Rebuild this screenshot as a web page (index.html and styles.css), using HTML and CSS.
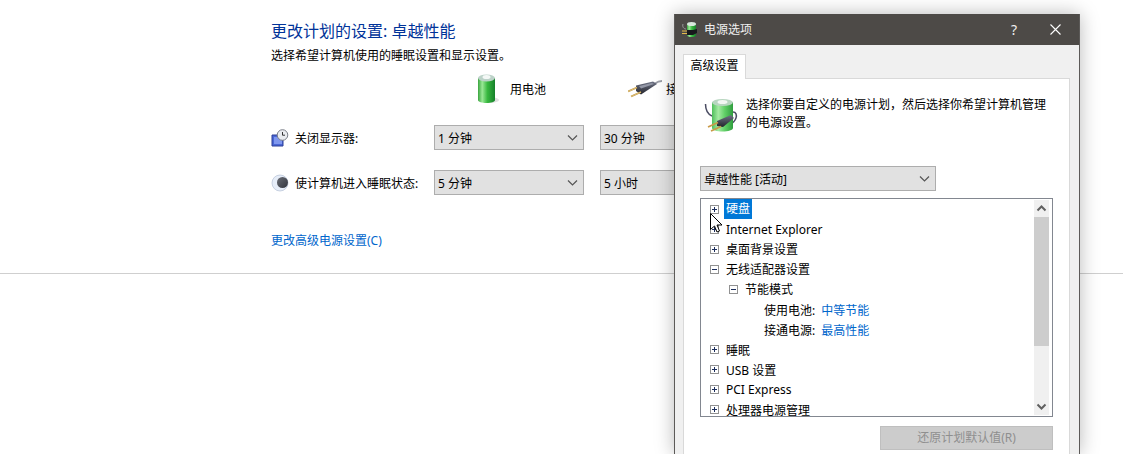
FILE: index.html
```html
<!DOCTYPE html>
<html lang="zh-CN">
  <head>
    <meta charset="UTF-8" />
    <title>电源选项</title>
    <link rel="stylesheet" href="styles.css">
  </head>
  <body>
    <svg class="defs" width="0" height="0">
      <defs>
        <linearGradient id="green" x1="0" x2="1" y1="0" y2="0">
          <stop offset="0" stop-color="#3aa53f" />
          <stop offset="0.25" stop-color="#9ae896" />
          <stop offset="0.55" stop-color="#38b83f" />
          <stop offset="1" stop-color="#15802a" />
        </linearGradient>
        <linearGradient id="green-soft" x1="0" x2="1" y1="0" y2="0">
          <stop offset="0" stop-color="#4fbf5c" />
          <stop offset="0.3" stop-color="#a4eaa2" />
          <stop offset="0.6" stop-color="#62d068" />
          <stop offset="1" stop-color="#2f9e3e" />
        </linearGradient>
        <linearGradient id="plug" x1="0" x2="0" y1="0" y2="1">
          <stop offset="0" stop-color="#6f7486" />
          <stop offset="1" stop-color="#22242c" />
        </linearGradient>
        <linearGradient id="moon" x1="0" x2="1" y1="0" y2="1">
          <stop offset="0" stop-color="#6a6d76" />
          <stop offset="1" stop-color="#33353d" />
        </linearGradient>
      </defs>
    </svg>

    <main class="plan">
      <h1 class="plan-title">更改计划的设置: 卓越性能</h1>
      <p class="plan-sub">选择希望计算机使用的睡眠设置和显示设置。</p>

      <div class="power-heads">
        <div class="power-head head-battery">
          <svg width="22" height="30" viewBox="0 0 22 30">
            <ellipse cx="13" cy="26" rx="9" ry="3" fill="#000" opacity="0.12" />
            <path d="M1 4v22c0 2 4 3 8.500 3s8.500-1 8.500-3V4z" fill="url(#green)" />
            <ellipse cx="9.500" cy="4" rx="8.500" ry="3.500" fill="#bcd2c8" />
            <ellipse cx="9.500" cy="3" rx="4" ry="2" fill="#f4f8f6" />
          </svg>
          <span>用电池</span>
        </div>
        <div class="power-head head-plug">
          <svg width="34" height="20" viewBox="0 0 34 20">
            <path d="M27 4.500c2-1.500 4-2.500 7-2.500" fill="none" stroke="#9a9da6" stroke-width="1.800" />
            <path d="M8 6.500L25 2.500l4 2.500L13 15.500 8 12z" fill="url(#plug)" />
            <path d="M11 7l13-3 2 1-13 4.500z" fill="#9397a6" />
            <path d="M0 12.500L9 8.500M3 17.500L13 13" stroke="#bf9440" stroke-width="1.800" />
            <path d="M0 12.500L9 8.500M3 17.500L13 13" stroke="#f2dc9c" stroke-width="0.600" />
          </svg>
          <span>接通电源</span>
        </div>
      </div>

      <div class="setting">
        <svg class="setting-icon" width="18" height="18" viewBox="0 0 18 18">
          <path d="M1 6h11v11H1z" fill="#4a67d6" stroke="#2c3f96" />
          <path d="M3 8h8v7H3z" fill="#7f97ee" />
          <circle cx="11.500" cy="6" r="5.300" fill="#e9ebef" stroke="#7b7f88" />
          <path d="M11.500 3v3.200h2.500" fill="none" stroke="#333" />
        </svg>
        <span class="setting-label">关闭显示器:</span>
        <div class="select"><span>1 分钟</span><svg class="chev" width="11" height="6" viewBox="0 0 11 6"><path d="M1 .5l4.500 4.500L10 .5" fill="none" stroke="#555" stroke-width="1.200" /></svg></div>
        <div class="select"><span>30 分钟</span></div>
      </div>
      <div class="setting">
        <svg class="setting-icon" width="18" height="18" viewBox="0 0 18 18">
          <circle cx="9" cy="9" r="8" fill="#e6edf8" stroke="#b4c0d4" stroke-width="0.700" />
          <circle cx="11.500" cy="8.500" r="5.500" fill="url(#moon)" />
        </svg>
        <span class="setting-label">使计算机进入睡眠状态:</span>
        <div class="select"><span>5 分钟</span><svg class="chev" width="11" height="6" viewBox="0 0 11 6"><path d="M1 .5l4.500 4.500L10 .5" fill="none" stroke="#555" stroke-width="1.200" /></svg></div>
        <div class="select"><span>5 小时</span></div>
      </div>

      <a class="plan-link" href="#">更改高级电源设置(C)</a>
    </main>
    <hr class="rule" />

    <section class="dialog">
      <header class="dialog-bar">
        <svg width="17" height="17" viewBox="0 0 17 17">
          <path d="M1 3c-1 3 1 5 3 5" fill="none" stroke="#9a9a9a" />
          <path d="M5 3v11c0 1.500 2 2 4.500 2s4.500-.5 4.500-2V3z" fill="url(#green)" />
          <ellipse cx="9.500" cy="3" rx="4.500" ry="2" fill="#d8e8dc" />
          <path d="M5 9h6l4-1v4l-4 2H5z" fill="#17181c" />
          <path d="M0 10h5M0 12.500h5" stroke="#e6bb4a" />
        </svg>
        <span class="dialog-title">电源选项</span>
        <span class="dialog-help">?</span>
        <svg class="dialog-close" width="11" height="11" viewBox="0 0 11 11"><path d="M.5.5l10 10M10.500.5l-10 10" stroke="#fff" stroke-width="1.100" /></svg>
      </header>
      <div class="dialog-body">
        <div class="tab">高级设置</div>
        <div class="panel">
          <div class="intro">
            <svg class="intro-icon" width="34" height="36" viewBox="0 0 34 36">
              <path d="M1.500 5c0 6 2 10 6.500 12M29 13c3 0 4 3 3 6s-3 5-6 6" fill="none" stroke="#4a4c62" stroke-width="1.500" />
              <path d="M8 3v26c0 2 5 3.500 10.500 3.500S29 31 29 29V3z" fill="url(#green-soft)" />
              <ellipse cx="18.500" cy="3.500" rx="10.500" ry="3.500" fill="#b8d6c0" />
              <ellipse cx="18.500" cy="3" rx="5" ry="2" fill="#f2f7f3" />
              <path d="M13 22l14-6 3 3-11 9-6-1z" fill="url(#plug)" />
              <path d="M4 28l10-4.500M7 32l10-4.500" stroke="#c99a48" stroke-width="1.800" />
            </svg>
            <p>选择你要自定义的电源计划，然后选择你希望计算机管理的电源设置。</p>
          </div>
          <div class="select select-plan"><span>卓越性能 [活动]</span><svg class="chev" width="11" height="6" viewBox="0 0 11 6"><path d="M1 .5l4.500 4.500L10 .5" fill="none" stroke="#555" stroke-width="1.200" /></svg></div>

          <div class="tree">
            <ul class="tree-list">
              <li class="node"><i class="box plus"></i><span class="node-sel">硬盘</span></li>
              <li class="node"><i class="box plus"></i><span>Internet Explorer</span></li>
              <li class="node"><i class="box plus"></i><span>桌面背景设置</span></li>
              <li class="node"><i class="box"></i><span>无线适配器设置</span></li>
              <li class="node lvl1"><i class="box"></i><span>节能模式</span></li>
              <li class="node lvl2"><span>使用电池:</span><a href="#">中等节能</a></li>
              <li class="node lvl2"><span>接通电源:</span><a href="#">最高性能</a></li>
              <li class="node"><i class="box plus"></i><span>睡眠</span></li>
              <li class="node"><i class="box plus"></i><span>USB 设置</span></li>
              <li class="node"><i class="box plus"></i><span>PCI Express</span></li>
              <li class="node"><i class="box plus"></i><span>处理器电源管理</span></li>
            </ul>
            <div class="scroll">
              <svg width="15" height="17" viewBox="0 0 15 17"><path d="M3.500 10.500l4-4 4 4" fill="none" stroke="#606060" stroke-width="2" /></svg>
              <div class="scroll-thumb"></div>
              <svg class="scroll-down" width="15" height="17" viewBox="0 0 15 17"><path d="M3.500 6.500l4 4 4-4" fill="none" stroke="#606060" stroke-width="2" /></svg>
            </div>
          </div>

          <div class="actions"><button class="restore" type="button">还原计划默认值(R)</button></div>
        </div>
      </div>
    </section>

    <svg class="cursor" width="13" height="20" viewBox="0 0 13 20">
      <path d="M.5.500v16l4-3.500 2.500 6 2.500-1-2.500-6h5z" fill="#fff" stroke="#000" />
    </svg>
  </body>
</html>
```

FILE: styles.css
```css
* {
  box-sizing: border-box;
}

html {
  font-family: "Noto Sans", "Noto Sans CJK SC", sans-serif;
  font-size: 12px;
}

body {
  margin: 0;
  height: 454px;
  overflow: hidden;
  position: relative;
  background: #fff;
  color: #000;
}

.defs {
  position: absolute;
}

a {
  color: #0066cc;
  text-decoration: none;
}

/* plan page behind the dialog */
.plan {
  height: 273px;
  padding: 19px 0 0 271px;
}

.plan-title {
  margin: 0;
  font-size: 16px;
  font-weight: 400;
  line-height: 24px;
  color: #003399;
}

.plan-sub {
  margin: 4px 0 0;
  line-height: 18px;
}

.power-heads {
  display: flex;
  align-items: center;
  height: 30px;
  margin-top: 9px;
  padding-left: 206px;
}

.power-head {
  display: flex;
  align-items: center;
  gap: 11px;
}

.head-battery {
  width: 151px;
}

.head-plug {
  gap: 4px;
}

.setting {
  display: flex;
  align-items: center;
  height: 25px;
  margin-bottom: 20px;
}

.power-heads + .setting {
  margin-top: 21px;
}

.setting-icon {
  flex: none;
}

.setting-label {
  width: 145px;
  padding-left: 6px;
  white-space: nowrap;
}

.select {
  flex: none;
  display: flex;
  align-items: center;
  justify-content: space-between;
  width: 150px;
  height: 25px;
  margin-right: 16px;
  padding: 0 5px 0 3px;
  background: #e1e1e1;
  border: 1px solid #adadad;
  white-space: nowrap;
}

.plan-link {
  display: block;
  margin-top: 37px;
  line-height: 18px;
}

.rule {
  margin: 0;
  border: 0;
  border-top: 1px solid #cfcfcf;
}

/* dialog */
.dialog {
  position: absolute;
  left: 674px;
  top: 14px;
  width: 406px;
  height: 440px;
  background: #f0f0f0;
  border: 1px solid #5c5a58;
  border-top: 0;
  border-bottom: 0;
  box-shadow: 0 0 18px rgba(0, 0, 0, 0.28);
}

.dialog-bar {
  display: flex;
  align-items: center;
  height: 31px;
  padding: 0 18px 0 7px;
  background: #4d4a47;
  color: #f0f0f0;
}

.dialog-title {
  margin-left: 5px;
  padding-bottom: 2px;
}

.dialog-help {
  margin-left: auto;
  margin-right: 33px;
  font-size: 14px;
}

.dialog-body {
  padding: 9px 9px 0 8px;
}

.tab {
  position: relative;
  z-index: 1;
  width: 63px;
  height: 25px;
  line-height: 22px;
  text-align: center;
  background: #fff;
  border: 1px solid #d9d9d9;
  border-bottom: 0;
}

.panel {
  height: 380px;
  margin-top: -1px;
  padding: 17px 16px 0;
  background: #fff;
  border: 1px solid #d9d9d9;
}

.intro {
  display: flex;
  gap: 8px;
  height: 70px;
  padding-left: 4px;
}

.intro-icon {
  flex: none;
  margin-top: 3px;
}

.intro p {
  margin: 0;
  width: 304px;
  line-height: 18px;
}

.select-plan {
  width: 236px;
  margin: 0;
}

.tree {
  display: flex;
  width: 353px;
  height: 219px;
  margin-top: 7px;
  padding: 0 3px 0 0;
  background: #fff;
  border: 1px solid #828790;
}

.tree-list {
  flex: 1;
  margin: 0;
  padding: 0;
  list-style: none;
  overflow: hidden;
}

.node {
  display: flex;
  align-items: center;
  height: 20.1px;
  padding-left: 9px;
  white-space: nowrap;
}

.lvl1 {
  padding-left: 28px;
}

.lvl2 {
  padding-left: 63px;
}

.lvl2 a {
  margin-left: 6px;
}

.node-sel {
  margin-left: -2px;
  padding: 0 2px;
  line-height: 20px;
  background: #0078d7;
  color: #fff;
}

.box {
  flex: none;
  position: relative;
  width: 9px;
  height: 9px;
  margin-right: 7px;
  background: #fff;
  border: 1px solid #919191;
}

.box::before {
  content: "";
  position: absolute;
  left: 1px;
  top: 3px;
  width: 5px;
  height: 1px;
  background: #1c2e5c;
}

.plus::after {
  content: "";
  position: absolute;
  left: 3px;
  top: 1px;
  width: 1px;
  height: 5px;
  background: #1c2e5c;
}

.scroll {
  flex: none;
  display: flex;
  flex-direction: column;
  width: 15px;
  margin: 1px 0;
  background: #f0f0f0;
}

.scroll svg {
  flex: none;
}

.scroll-thumb {
  height: 129px;
  background: #cdcdcd;
}

.scroll-down {
  margin-top: auto;
}

.actions {
  display: flex;
  justify-content: flex-end;
  width: 353px;
  margin-top: 9px;
}

.restore {
  width: 173px;
  height: 24px;
  padding: 0 0 2px;
  font: inherit;
  color: #8f8f8f;
  background: #cccccc;
  border: 1px solid #bfbfbf;
}

.cursor {
  position: absolute;
  left: 710px;
  top: 213px;
}
```
